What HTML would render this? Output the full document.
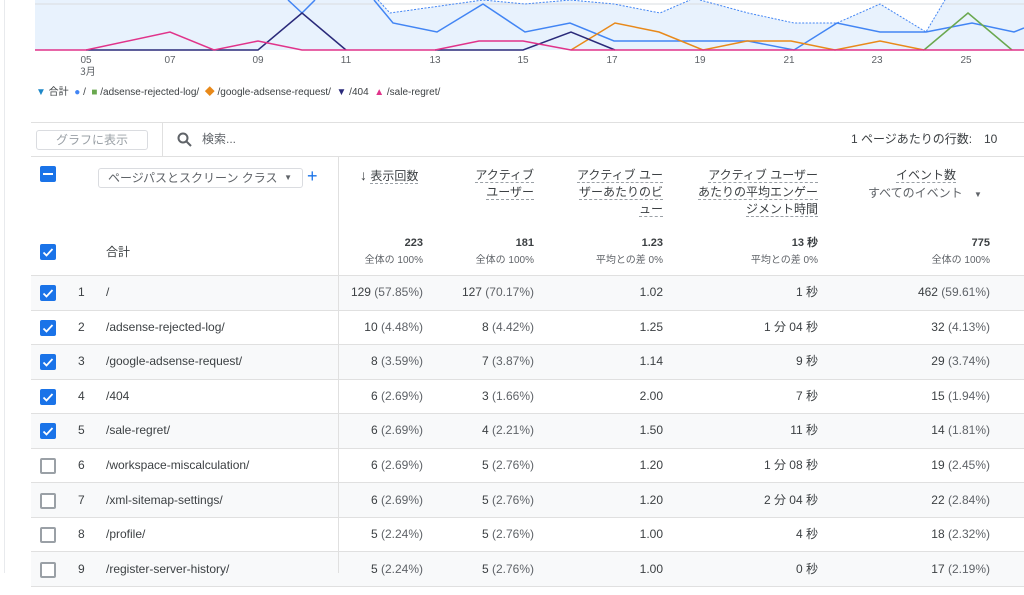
<!DOCTYPE html>
<html><head><meta charset="utf-8"><style>
*{margin:0;padding:0;box-sizing:border-box}
body{width:1024px;height:573px;overflow:hidden;background:#fff;font-family:"Liberation Sans","Noto Sans CJK JP",sans-serif;color:#3c4043;position:relative;font-size:12px;line-height:16px}
.a{position:absolute;white-space:nowrap;line-height:16px}
.r{text-align:right}
.cb{position:absolute;left:40px;width:16px;height:16px;border-radius:2px}
.on{background:#1a73e8}
.off{border:2px solid #9aa0a6;background:#fff}
.row{position:absolute;left:31px;width:993px;height:35px;border-bottom:1px solid #e0e0e0}
.g{color:#5f6368}
.dl{border-bottom:1px dashed #9aa0a6}
</style></head><body>
<div class="a" style="left:4px;top:0;width:1px;height:573px;background:#e8eaed"></div>
<svg class="a" style="left:0;top:0" width="1024" height="80">
<polygon fill="#e8f2fd" points="35,0 378,0 390,13 483,0 525,4 570,0 614,4 660,13 690,0 700,0 748,13 794,23 837,23 880,4 926,32 945,0 1024,0 1024,50 35,50"/>
<line x1="35" y1="4" x2="1024" y2="4" stroke="#dadce0"/>
<polyline fill="none" stroke="#4285f4" stroke-width="1" stroke-dasharray="2,1.5" points="378,0 390,13 483,0 525,4 570,0 614,4 660,13 690,0"/>
<polyline fill="none" stroke="#4285f4" stroke-width="1" stroke-dasharray="2,1.5" points="700,0 748,13 794,23 837,23 880,4 926,32 945,0"/>
<polyline fill="none" stroke="#4285f4" stroke-width="1.5" points="288,0 302,13 315,0"/>
<polyline fill="none" stroke="#4285f4" stroke-width="1.5" points="374,0 393,23 437,32 483,4 525,32 570,23 614,41 748,41 794,50 837,23 880,32 926,32 972,23 1014,32 1024,28"/>
<polyline fill="none" stroke="#e8891a" stroke-width="1.5" points="571,50 615,23 659,32 703,50 747,41 791,41 835,50 880,41 924,50"/>
<polyline fill="none" stroke="#6aa84f" stroke-width="1.5" points="924,50 968,13 1012,50"/>
<polyline fill="none" stroke="#2a2a7a" stroke-width="1.5" points="86,50 258,50 302,13 346,50"/>
<polyline fill="none" stroke="#2a2a7a" stroke-width="1.5" points="435,50 523,50 571,32 615,50"/>
<polyline fill="none" stroke="#e0338a" stroke-width="1.5" points="35,50 86,50 170,32 214,50 258,41 302,50 435,50 479,41 523,41 571,50 1024,50"/>
<g font-size="10" fill="#5f6368" font-family="Liberation Sans,sans-serif" text-anchor="middle">
<text x="86" y="63">05</text><text x="88" y="75" font-family="Noto Sans CJK JP,sans-serif">3月</text>
<text x="170" y="63">07</text><text x="258" y="63">09</text><text x="346" y="63">11</text><text x="435" y="63">13</text><text x="523" y="63">15</text><text x="612" y="63">17</text><text x="700" y="63">19</text><text x="789" y="63">21</text><text x="877" y="63">23</text><text x="966" y="63">25</text>
</g>
</svg>
<div class="a" style="left:36px;top:85px;font-size:10px;color:#3c4043">
<span style="color:#1e88c8">&#9660;</span> 合計 &nbsp;<span style="color:#4285f4">&#9679;</span> / &nbsp;<span style="color:#6aa84f">&#9632;</span> /adsense-rejected-log/ &nbsp;<span style="color:#e8891a">&#9670;</span> /google-adsense-request/ &nbsp;<span style="color:#2a2a7a">&#9660;</span> /404 &nbsp;<span style="color:#e0338a">&#9650;</span> /sale-regret/</div>

<div class="a" style="left:31px;top:122px;width:993px;height:1px;background:#e0e0e0"></div>
<div class="a" style="left:31px;top:156px;width:993px;height:1px;background:#e0e0e0"></div>
<div class="a" style="left:36px;top:130px;width:112px;height:20px;border:1px solid #dadce0;border-radius:3px;color:#9aa0a6;text-align:center;line-height:18px">グラフに表示</div>
<div class="a" style="left:162px;top:123px;width:1px;height:33px;background:#e0e0e0"></div>
<svg class="a" style="left:177px;top:132px" width="16" height="16"><circle cx="6" cy="6" r="4.5" fill="none" stroke="#5f6368" stroke-width="2"/><line x1="9.5" y1="9.5" x2="14" y2="14" stroke="#5f6368" stroke-width="2"/></svg>
<div class="a g" style="left:202px;top:131px">検索...</div>
<div class="a" style="left:851px;top:131px">1 ページあたりの行数:</div>
<div class="a" style="left:984px;top:131px">10</div>

<div class="cb on" style="top:166px"><div style="position:absolute;left:3px;top:7px;width:10px;height:2px;background:#fff"></div></div>
<div class="a" style="left:98px;top:168px;width:205px;height:20px;border:1px solid #dadce0;border-radius:3px;padding-left:9px;line-height:18px;color:#5f6368">ページパスとスクリーン クラス<span style="position:absolute;right:10px;font-size:8px">&#9660;</span></div>
<div class="a" style="left:307px;top:168px;color:#1a73e8;font-size:18px">+</div>
<div class="a" style="left:338px;top:157px;width:1px;height:416px;background:#e0e0e0"></div>

<div class="a" style="left:360px;top:167px"><b style="font-size:14px">&#8595;</b> <span class="dl">表示回数</span></div>
<div class="a r" style="right:490px;top:167px;line-height:17px"><span class="dl">アクティブ</span><br><span class="dl">ユーザー</span></div>
<div class="a r" style="right:361px;top:167px;line-height:17px"><span class="dl">アクティブ ユー</span><br><span class="dl">ザーあたりのビ</span><br><span class="dl">ュー</span></div>
<div class="a r" style="right:206px;top:167px;line-height:17px"><span class="dl">アクティブ ユーザー</span><br><span class="dl">あたりの平均エンゲー</span><br><span class="dl">ジメント時間</span></div>
<div class="a" style="left:896px;top:167px"><span class="dl">イベント数</span></div>
<div class="a g" style="left:868px;top:185px">すべてのイベント <span style="font-size:8px;margin-left:8px">&#9660;</span></div>

<svg width="0" height="0" style="position:absolute"><defs><symbol id="ck" viewBox="0 0 16 16"><path d="M3.5 8.5l3 3 6-6.5" fill="none" stroke="#fff" stroke-width="1.8"/></symbol></defs></svg>
<div class="cb on" style="top:244px"><svg width="16" height="16"><use href="#ck"/></svg></div>
<div class="a" style="left:106px;top:244px">合計</div>
<div class="a r" style="right:601px;top:235px;font-weight:bold;font-size:11px">223</div>
<div class="a r g" style="right:601px;top:253px;font-size:10px">全体の 100%</div>
<div class="a r" style="right:490px;top:235px;font-weight:bold;font-size:11px">181</div>
<div class="a r g" style="right:490px;top:253px;font-size:10px">全体の 100%</div>
<div class="a r" style="right:361px;top:235px;font-weight:bold;font-size:11px">1.23</div>
<div class="a r g" style="right:361px;top:253px;font-size:10px">平均との差 0%</div>
<div class="a r" style="right:206px;top:235px;font-weight:bold;font-size:11px">13 秒</div>
<div class="a r g" style="right:206px;top:253px;font-size:10px">平均との差 0%</div>
<div class="a r" style="right:34px;top:235px;font-weight:bold;font-size:11px">775</div>
<div class="a r g" style="right:34px;top:253px;font-size:10px">全体の 100%</div>
<div class="a" style="left:31px;top:275px;width:993px;height:1px;background:#e0e0e0"></div>

<div class="row" style="top:276px;background:#f8f9fa"></div>
<div class="row" style="top:310px"></div>
<div class="row" style="top:345px;background:#f8f9fa"></div>
<div class="row" style="top:379px"></div>
<div class="row" style="top:414px;background:#f8f9fa"></div>
<div class="row" style="top:448px"></div>
<div class="row" style="top:483px;background:#f8f9fa"></div>
<div class="row" style="top:517px"></div>
<div class="row" style="top:552px;background:#f8f9fa"></div>
<div class="a" style="left:338px;top:276px;width:1px;height:297px;background:#e0e0e0"></div>
<div style="position:absolute;left:0;top:284px;width:1024px">
<div style="position:relative;height:34.6px"><div class="cb on" style="top:1px"><svg width="16" height="16"><use href="#ck"/></svg></div><span class="a" style="left:78px">1</span><span class="a" style="left:106px">/</span><span class="a r" style="right:601px">129 <span class="g">(57.85%)</span></span><span class="a r" style="right:490px">127 <span class="g">(70.17%)</span></span><span class="a r" style="right:361px">1.02</span><span class="a r" style="right:206px">1 秒</span><span class="a r" style="right:34px">462 <span class="g">(59.61%)</span></span></div>
<div style="position:relative;height:34.6px"><div class="cb on" style="top:1px"><svg width="16" height="16"><use href="#ck"/></svg></div><span class="a" style="left:78px">2</span><span class="a" style="left:106px">/adsense-rejected-log/</span><span class="a r" style="right:601px">10 <span class="g">(4.48%)</span></span><span class="a r" style="right:490px">8 <span class="g">(4.42%)</span></span><span class="a r" style="right:361px">1.25</span><span class="a r" style="right:206px">1 分 04 秒</span><span class="a r" style="right:34px">32 <span class="g">(4.13%)</span></span></div>
<div style="position:relative;height:34.6px"><div class="cb on" style="top:1px"><svg width="16" height="16"><use href="#ck"/></svg></div><span class="a" style="left:78px">3</span><span class="a" style="left:106px">/google-adsense-request/</span><span class="a r" style="right:601px">8 <span class="g">(3.59%)</span></span><span class="a r" style="right:490px">7 <span class="g">(3.87%)</span></span><span class="a r" style="right:361px">1.14</span><span class="a r" style="right:206px">9 秒</span><span class="a r" style="right:34px">29 <span class="g">(3.74%)</span></span></div>
<div style="position:relative;height:34.6px"><div class="cb on" style="top:1px"><svg width="16" height="16"><use href="#ck"/></svg></div><span class="a" style="left:78px">4</span><span class="a" style="left:106px">/404</span><span class="a r" style="right:601px">6 <span class="g">(2.69%)</span></span><span class="a r" style="right:490px">3 <span class="g">(1.66%)</span></span><span class="a r" style="right:361px">2.00</span><span class="a r" style="right:206px">7 秒</span><span class="a r" style="right:34px">15 <span class="g">(1.94%)</span></span></div>
<div style="position:relative;height:34.6px"><div class="cb on" style="top:1px"><svg width="16" height="16"><use href="#ck"/></svg></div><span class="a" style="left:78px">5</span><span class="a" style="left:106px">/sale-regret/</span><span class="a r" style="right:601px">6 <span class="g">(2.69%)</span></span><span class="a r" style="right:490px">4 <span class="g">(2.21%)</span></span><span class="a r" style="right:361px">1.50</span><span class="a r" style="right:206px">11 秒</span><span class="a r" style="right:34px">14 <span class="g">(1.81%)</span></span></div>
<div style="position:relative;height:34.6px"><div class="cb off" style="top:1px"></div><span class="a" style="left:78px">6</span><span class="a" style="left:106px">/workspace-miscalculation/</span><span class="a r" style="right:601px">6 <span class="g">(2.69%)</span></span><span class="a r" style="right:490px">5 <span class="g">(2.76%)</span></span><span class="a r" style="right:361px">1.20</span><span class="a r" style="right:206px">1 分 08 秒</span><span class="a r" style="right:34px">19 <span class="g">(2.45%)</span></span></div>
<div style="position:relative;height:34.6px"><div class="cb off" style="top:1px"></div><span class="a" style="left:78px">7</span><span class="a" style="left:106px">/xml-sitemap-settings/</span><span class="a r" style="right:601px">6 <span class="g">(2.69%)</span></span><span class="a r" style="right:490px">5 <span class="g">(2.76%)</span></span><span class="a r" style="right:361px">1.20</span><span class="a r" style="right:206px">2 分 04 秒</span><span class="a r" style="right:34px">22 <span class="g">(2.84%)</span></span></div>
<div style="position:relative;height:34.6px"><div class="cb off" style="top:1px"></div><span class="a" style="left:78px">8</span><span class="a" style="left:106px">/profile/</span><span class="a r" style="right:601px">5 <span class="g">(2.24%)</span></span><span class="a r" style="right:490px">5 <span class="g">(2.76%)</span></span><span class="a r" style="right:361px">1.00</span><span class="a r" style="right:206px">4 秒</span><span class="a r" style="right:34px">18 <span class="g">(2.32%)</span></span></div>
<div style="position:relative;height:34.6px"><div class="cb off" style="top:1px"></div><span class="a" style="left:78px">9</span><span class="a" style="left:106px">/register-server-history/</span><span class="a r" style="right:601px">5 <span class="g">(2.24%)</span></span><span class="a r" style="right:490px">5 <span class="g">(2.76%)</span></span><span class="a r" style="right:361px">1.00</span><span class="a r" style="right:206px">0 秒</span><span class="a r" style="right:34px">17 <span class="g">(2.19%)</span></span></div>
</div>
</body></html>
